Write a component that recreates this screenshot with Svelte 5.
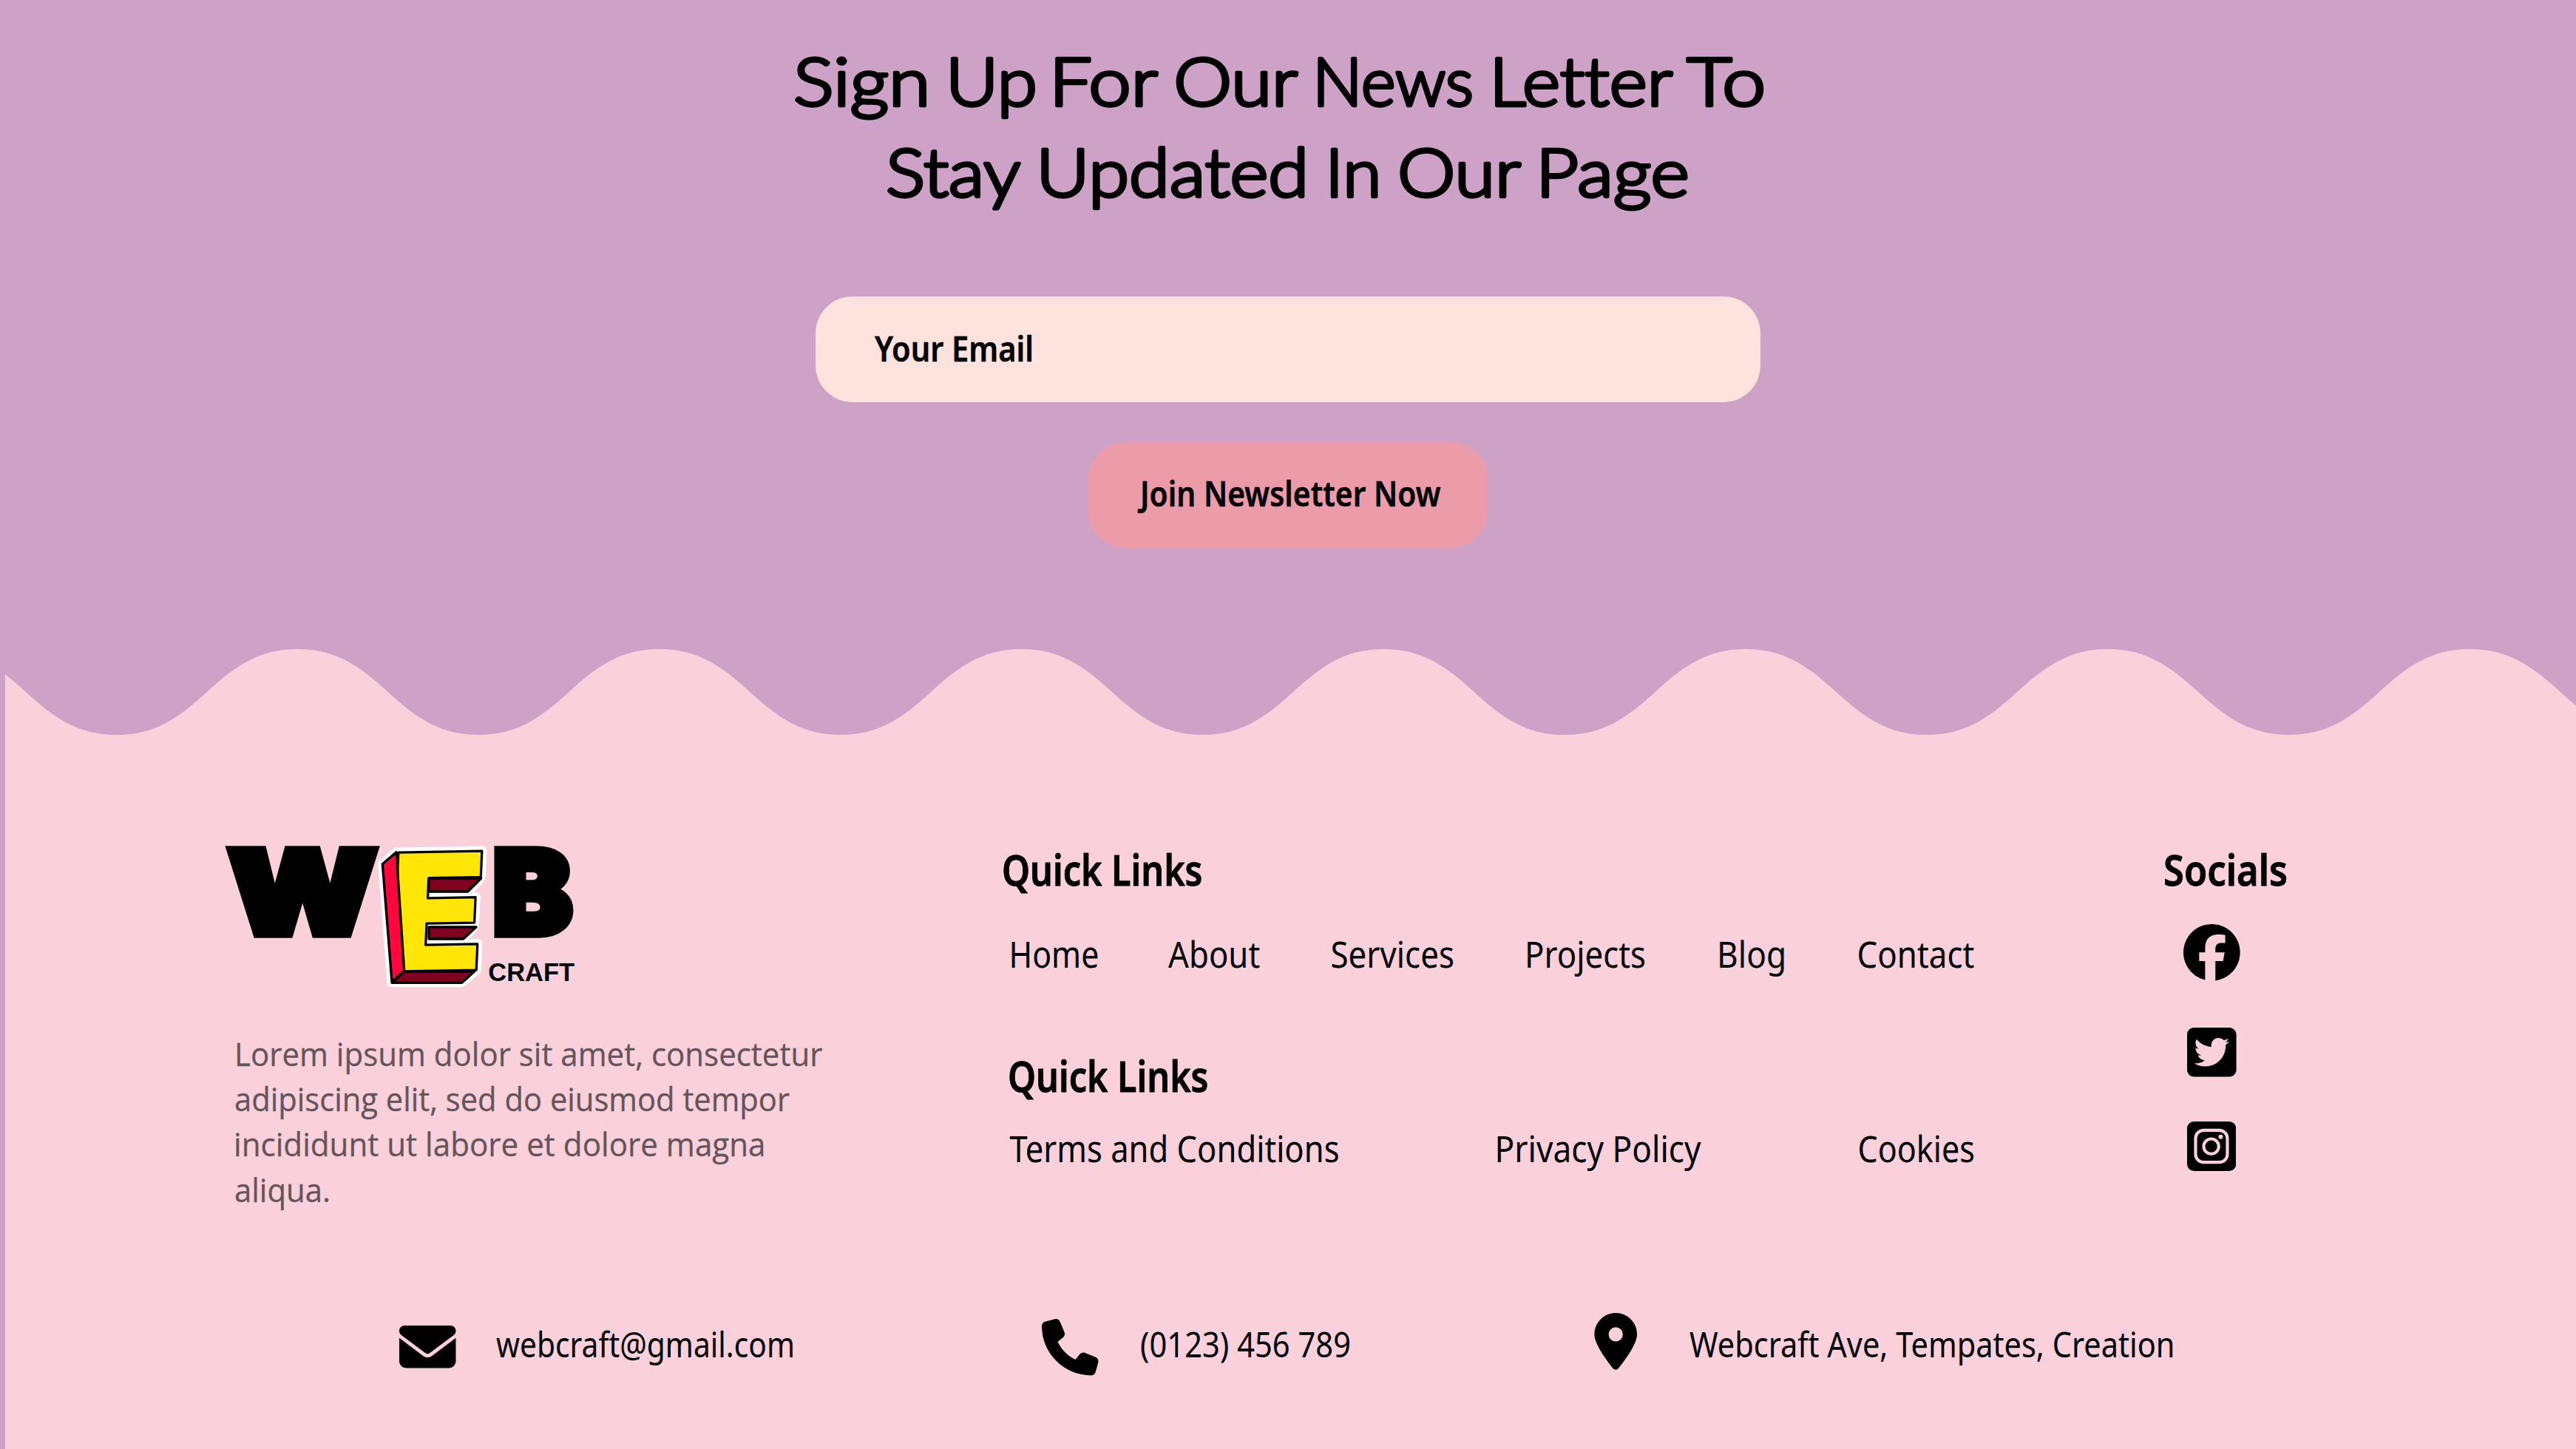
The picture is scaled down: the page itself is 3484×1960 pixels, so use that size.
<script>
  // Headline words: text, start of the drawn word, drawn width, left and right side bearings.
  const titleTop = [
    ['Sign', 0, 179.3, 2, 4],
    ['Up', 208.9, 118, 5, 1],
    ['For', 350, 142, 6, -1],
    ['Our', 514.3, 167, 2, -1],
    ['News', 706.3, 211.6, 6, 0],
    ['Letter', 945.3, 243, 6, -1],
    ['To', 1206.3, 106, 0, 1],
  ];
  const titleBottom = [
    ['Stay', 0, 181.3, 2, -1],
    ['Updated', 206.3, 359.8, 5, 4],
    ['In', 598.3, 66, 6, 4],
    ['Our', 692, 166, 2, -1],
    ['Page', 883, 201, 6, 1],
  ];

  // Each label: text, drawn width, left and right side bearings.
  const links = [
    ['Home', 116.3, 3.5, 2],
    ['About', 124.2, 0, 0],
    ['Services', 165.4, 1.5, 0.5],
    ['Projects', 159.6, 4, 0.5],
    ['Blog', 88.6, 4, 1.5],
    ['Contact', 156.3, 2.5, 0],
  ];
  const legal = [
    ['Terms and Conditions', 444.5, 0.5, 1],
    ['Privacy Policy', 275.6, 3.5, 0],
    ['Cookies', 155.4, 2.5, 0.5],
  ];
  const about = [
    ['Lorem ipsum dolor sit amet, consectetur', 792.4, 2, 1],
    ['adipiscing elit, sed do eiusmod tempor', 749, 2, 0],
    ['incididunt ut labore et dolore magna', 714, 3, 2.5],
    ['aliqua.', 126, 2, 2],
  ];

  // Wave edge: crests 489.7px apart, 116px deep.
  const half = 244.85;
  function wave() {
    let x = -94.5;
    let up = true;
    let d = `M${x} 0`;
    while (x < 3500) {
      const a = up ? 0 : 116;
      const m = 58;
      const s = up ? 1 : -1;
      const q = x + half / 2;
      const e = x + half;
      d += `C${x + 50} ${a} ${q - 40} ${m - 37 * s} ${q} ${m}`;
      d += `C${q + 40} ${m + 37 * s} ${e - 50} ${116 - a} ${e} ${116 - a}`;
      x = e;
      up = !up;
    }
    return d + 'V120H-100Z';
  }
</script>

{#snippet label(text, w, lb, rb, kind)}
  <svg class="label {kind}" width={w} height="36" role="img" aria-label={text}>
    <text x={-lb} y="36" textLength={w + lb + rb} lengthAdjust="spacingAndGlyphs">{text}</text>
  </svg>
{/snippet}

{#snippet headline(words, w, kind)}
  <svg class="label title {kind}" width={w} height="36">
    {#each words as [t, x, len, lb, rb]}
      <text x={x - lb} y="36" textLength={len + lb + rb} lengthAdjust="spacingAndGlyphs">{t}</text>
    {/each}
  </svg>
{/snippet}

<main>
  <section class="newsletter">
    <h1>
      {@render headline(titleTop, 1312.5, 'first')}
      {@render headline(titleBottom, 1084.5, '')}
    </h1>
    <div class="field">{@render label('Your Email', 214, 0, 1, 'strong')}</div>
    <button>{@render label('Join Newsletter Now', 407.5, -1, 0, 'strong')}</button>
  </section>

  <footer>
    <svg class="wave" width="3477" height="117" viewBox="0 0 3477 117"><path d={wave()} /></svg>

    <div class="columns">
      <div class="brand">
        <svg class="logo" width="473" height="197" viewBox="75 60 1419 591">
          <g class="heavy">
            <text x="87" y="428" font-size="468" textLength="601" lengthAdjust="spacingAndGlyphs">W</text>
            <text x="1160" y="428" font-size="468" textLength="320" lengthAdjust="spacingAndGlyphs">B</text>
          </g>
          <g class="halo">
            <path d="M768 98L714 146L750 626H1034L1085 580L800 580Z" />
            <path d="M914 214H1100L1058 256H914ZM918 402H1080L1040 448H920Z" />
            <text transform="translate(6 16) skewX(-2.600) skewY(-1)" x="744" y="580" font-size="664" textLength="396" lengthAdjust="spacingAndGlyphs">E</text>
          </g>
          <path class="under" d="M800 582H1085L1034 628H750Z" />
          <path class="under" d="M900 204H1112L1058 258H900Z" />
          <path class="under" d="M900 402H1092L1040 450H900Z" />
          <text class="face" transform="translate(6 16) skewX(-2.600) skewY(-1)" x="744" y="580" font-size="664" textLength="396" lengthAdjust="spacingAndGlyphs">E</text>
          <path class="side" d="M768 98L712 146L750 624L800 580Z" />
          <text class="craft" x="1141" y="620" font-size="106" textLength="350" lengthAdjust="spacingAndGlyphs">CRAFT</text>
        </svg>
        <div class="about">
          {#each about as [t, w, l, r]}{@render label(t, w, l, r, 'copy')}{/each}
        </div>
      </div>

      <div class="links">
        {@render label('Quick Links', 268, 3, 0.5, 'head')}
        <nav class="main-nav">
          {#each links as [t, w, l, r]}{@render label(t, w, l, r, 'link')}{/each}
        </nav>
        <div class="second">{@render label('Quick Links', 268, 3, 0.5, 'head')}</div>
        <nav class="legal">
          {#each legal as [t, w, l, r]}{@render label(t, w, l, r, 'link')}{/each}
        </nav>
      </div>

      <div class="socials">
        {@render label('Socials', 165, 2, 1, 'head')}
        <svg class="fb" width="76.7" height="76.7" viewBox="8 8 496 496"><path d="M504 256C504 119 393 8 256 8S8 119 8 256c0 116 80 214 190 241V331h-52V256h52v-33c0-85 39-124 122-124 16 0 43 3 54 6v69c-6-1-16-1-29-1-41 0-57 15-57 56v27h81l-14 75h-67v171C413 487 504 380 504 256z" /></svg>
        <svg class="tw" width="66.6" height="66.6" viewBox="0 32 448 448"><path d="M64 32C28.700 32 0 60.700 0 96V416c0 35.300 28.700 64 64 64H384c35.300 0 64-28.700 64-64V96c0-35.300-28.700-64-64-64H64zM351.100 190.800c.2 2.800.2 5.700.2 8.500 0 86.700-66 186.600-186.600 186.600-37.200 0-71.700-10.800-100.700-29.400 5.300.6 10.400.8 15.800.8 30.700 0 58.900-10.400 81.400-28-28.800-.6-53-19.500-61.300-45.500 10.100 1.500 19.200 1.500 29.600-1.200-30-6.100-52.500-32.500-52.500-64.400v-.8c8.700 4.900 18.900 7.900 29.600 8.300a65.447 65.447 0 0 1-29.200-54.600c0-12.200 3.200-23.400 8.900-33.100 32.300 39.800 80.800 65.800 135.200 68.600-9.300-44.500 24-80.600 64-80.600 18.900 0 35.900 7.900 47.900 20.700 14.800-2.800 29-8.300 41.600-15.800-4.900 15.200-15.200 28-28.800 36.100 13.200-1.400 26-5.100 37.800-10.200-8.900 13.100-20.100 24.700-32.900 34z" fill-rule="evenodd" /></svg>
        <svg class="ig" width="66.3" height="67" viewBox="0 0 199 201">
          <rect width="199" height="201" rx="28" />
          <rect class="line" x="34.500" y="35.500" width="129" height="130" rx="33" />
          <circle class="line" cx="98" cy="101" r="30.500" />
          <circle class="dot" cx="136.500" cy="62.500" r="9" />
        </svg>
      </div>
    </div>

    <address>
      <svg class="mail" width="76.500" height="57.500" viewBox="0 64 512 384"><path d="M48 64C21.500 64 0 85.500 0 112c0 15.100 7.100 29.300 19.200 38.400L236.800 313.600c11.400 8.500 27 8.500 38.400 0L492.800 150.400c12.100-9.100 19.200-23.300 19.200-38.400c0-26.500-21.500-48-48-48H48zM0 176V384c0 35.300 28.700 64 64 64H448c35.300 0 64-28.700 64-64V176L294.400 339.200c-22.800 17.100-54 17.100-76.800 0L0 176z" /></svg>
      {@render label('webcraft@gmail.com', 401, 1, 2, 'contact')}
      <svg class="phone" width="76.500" height="76.500" viewBox="0 0 512 512"><path d="M164.900 24.600c-7.700-18.600-28-28.500-47.400-23.200l-88 24C12.100 30.200 0 46 0 64C0 311.400 200.600 512 448 512c18 0 33.800-12.100 38.600-29.500l24-88c5.300-19.400-4.600-39.700-23.200-47.400l-96-40c-16.300-6.800-35.200-2.100-46.300 11.600L304.700 368C234.300 334.700 177.300 277.700 144 207.300L193.300 167c13.700-11.200 18.400-30 11.600-46.300l-40-96z" /></svg>
      {@render label('(0123) 456 789', 280.5, 3, 1.5, 'contact')}
      <svg class="pin" width="58.500" height="77" viewBox="0 0 384 512"><path d="M215.700 499.200C267 435 384 279.400 384 192C384 86 298 0 192 0S0 86 0 192c0 87.400 117 243 168.300 307.200c12.300 15.300 35.100 15.300 47.400 0zM192 128a64 64 0 1 1 0 128 64 64 0 1 1 0-128z" /></svg>
      {@render label('Webcraft Ave, Tempates, Creation', 655, 0, 1.5, 'contact')}
    </address>
  </footer>
</main>

<style>
  :global(body) {
    margin: 0;
    background: #cea2c7;
  }
  main {
    width: 3484px;
    height: 1960px;
    overflow: hidden;
    background: #cea2c7;
    font-family: 'Noto Sans', 'Open Sans', sans-serif;
  }
  svg {
    display: block;
    flex: none;
  }
  .label,
  .logo {
    overflow: visible;
  }
  .newsletter {
    height: 878px;
    box-sizing: border-box;
    padding-top: 107px;
    display: flex;
    flex-direction: column;
    align-items: center;
  }
  h1 {
    margin: 0 0 135px;
    display: flex;
    flex-direction: column;
    align-items: center;
    gap: 86.500px;
  }
  .title {
    font: 300 90px Lato, sans-serif;
    font-variant-ligatures: none;
    stroke: #000;
    stroke-width: 4.500px;
    stroke-linejoin: round;
  }
  .first {
    margin-right: 22px;
  }
  .field {
    width: 1277.500px;
    height: 143.500px;
    box-sizing: border-box;
    padding: 52px 79.500px;
    border-radius: 50px;
    background: #fee2dd;
  }
  button {
    width: 540px;
    height: 143.500px;
    margin-top: 53.500px;
    padding: 51px 69px 49px;
    border: 0;
    border-radius: 50px;
    background: #ec9ba8;
    display: flex;
  }
  .strong {
    font: 600 46.500px 'Noto Sans', sans-serif;
    stroke: #000;
    stroke-width: 0.500px;
  }
  footer {
    margin-left: 7px;
    height: 1082px;
  }
  .wave {
    fill: #fad0da;
  }
  .columns {
    height: 781px;
    box-sizing: border-box;
    padding: 145px 0 0 298px;
    display: flex;
    align-items: flex-start;
    background: #fad0da;
  }
  .brand {
    width: 1052.500px;
  }
  .about {
    padding: 69px 0 0 14px;
    display: flex;
    flex-direction: column;
    gap: 25.200px;
  }
  .copy {
    font: 400 43.500px 'Open Sans', sans-serif;
    fill: #65545a;
    stroke: #65545a;
    stroke-width: 0.300px;
  }
  .links {
    width: 1313px;
    padding-top: 22px;
  }
  .head {
    font: 600 57px 'Noto Sans', sans-serif;
    stroke: #000;
    stroke-width: 0.900px;
  }
  .main-nav {
    display: grid;
    grid-template-columns: 211.800px 221.200px 265.400px 259.600px 187.700px auto;
    margin: 75px 0 0 10.500px;
  }
  .second {
    margin: 132px 0 0 8px;
  }
  .legal {
    display: flex;
    justify-content: space-between;
    margin: 59px 0 0 8px;
  }
  .link {
    font: 400 50px 'Noto Sans', sans-serif;
  }
  .socials {
    padding: 22px 0 0 257px;
  }
  .fb {
    margin: 52px 0 0 25.500px;
  }
  .tw {
    margin: 63.500px 0 0 30.500px;
  }
  .ig {
    margin: 60px 0 0 30.500px;
  }
  .line {
    fill: none;
    stroke: #fad0da;
    stroke-width: 12.500px;
  }
  .dot {
    fill: #fad0da;
  }
  address {
    height: 185px;
    display: flex;
    align-items: flex-start;
    padding-left: 533px;
    background: #fad0da;
  }
  .contact {
    font: 400 47px 'Noto Sans', sans-serif;
    margin: 24px 0 0 55px;
  }
  .mail {
    margin-top: 17px;
  }
  .phone {
    margin: 8px 0 0 336.500px;
  }
  .phone + .contact {
    margin-left: 59px;
  }
  .pin {
    margin-left: 331px;
  }
  .pin + .contact {
    margin-left: 70px;
  }
  .heavy {
    font-family: Inter, sans-serif;
    font-weight: 900;
    stroke: #000;
    stroke-width: 34px;
  }
  .halo {
    fill: #fff;
    stroke: #fff;
    stroke-width: 40px;
    stroke-linejoin: round;
    font-family: Inter, sans-serif;
    font-weight: 900;
  }
  .face {
    fill: #ffe608;
    font-family: Inter, sans-serif;
    font-weight: 900;
  }
  .face,
  .side,
  .under {
    stroke: #000;
    stroke-width: 10px;
    stroke-linejoin: round;
  }
  .side {
    fill: #ff063c;
  }
  .under {
    fill: #80001f;
  }
  .craft {
    font-family: 'Liberation Sans', sans-serif;
    font-weight: 700;
  }
</style>
